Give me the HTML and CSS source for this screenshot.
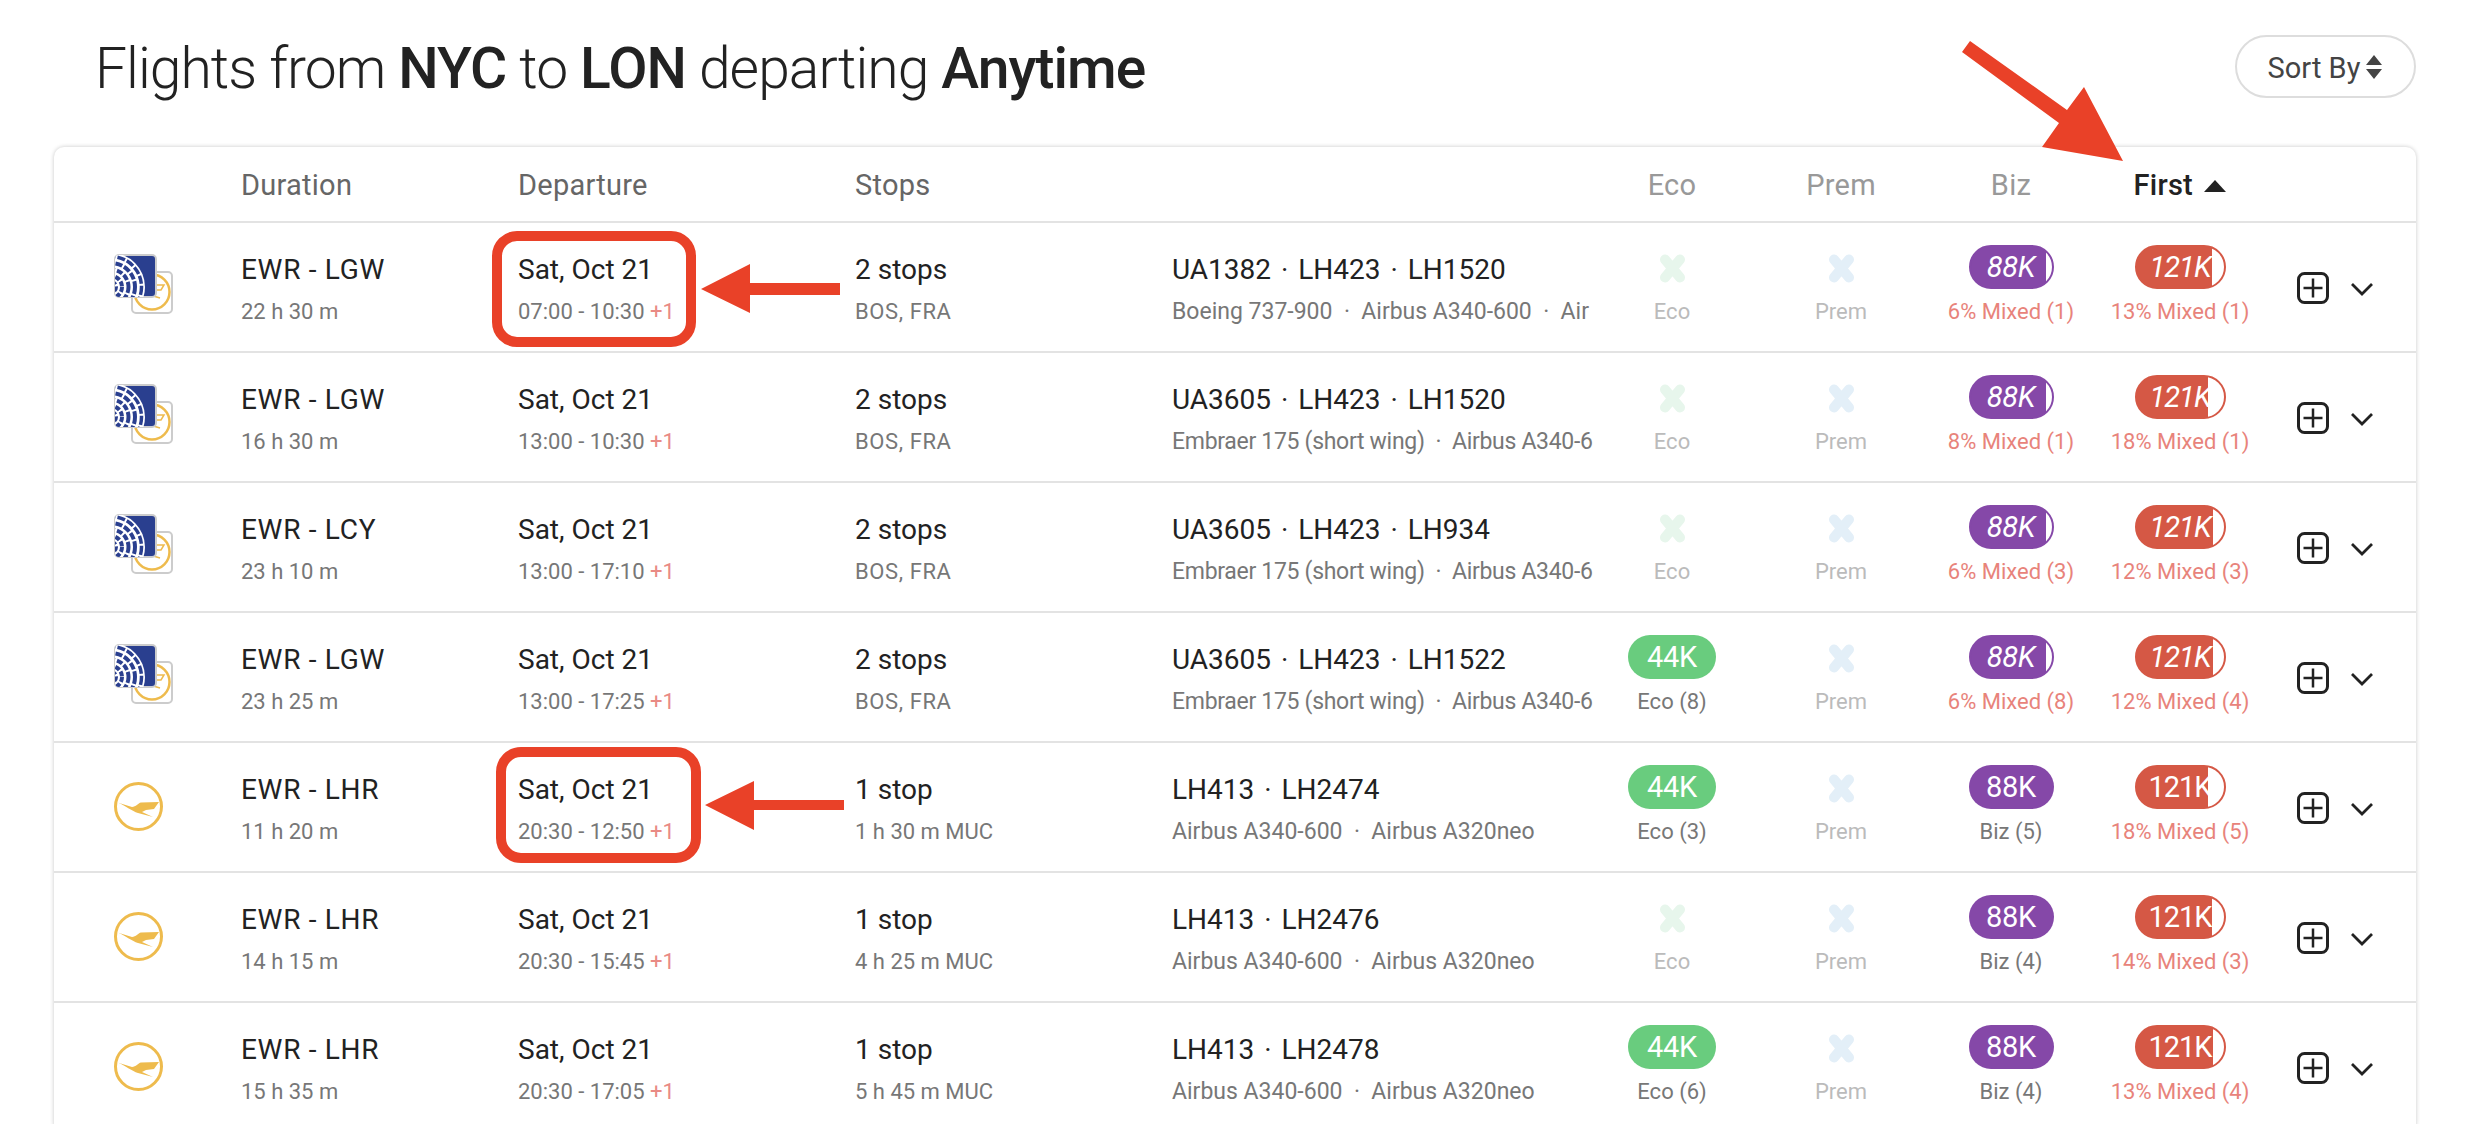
FILE: index.html
```html
<!DOCTYPE html>
<html lang="en">
<head>
<meta charset="utf-8">
<title>Flights from NYC to LON</title>
<link rel="stylesheet" href="styles.css">
</head>
<body>
<svg class="defs" width="0" height="0" aria-hidden="true">
  <defs>
    <clipPath id="ua-clip"><rect x="1" y="1" width="41" height="42" rx="4"/></clipPath>
    <symbol id="bird" viewBox="0 0 60 60">
      <path d="M4.3 28.7L18 33C22 33 24 29 27 28.5L45 28L40 35L32 36L28 38L39 43L24 39C18 37 12 32 4.3 28.7Z" fill="#eebb4d"/>
    </symbol>
    <symbol id="logo-lh" viewBox="0 0 60 60">
      <circle cx="24.5" cy="32.5" r="23" fill="#fff" stroke="#eebb4d" stroke-width="3"/>
      <use href="#bird" width="60" height="60"/>
    </symbol>
    <symbol id="logo-mix" viewBox="0 0 60 60">
      <rect x="18" y="18" width="40" height="41" rx="4" fill="#fff" stroke="#ccc" stroke-width="2"/>
      <circle cx="38" cy="38" r="17.500" fill="none" stroke="#eebb4d" stroke-width="2.500"/>
      <path d="M36 31H50L47 36H42ZM36 41L46 44" fill="none" stroke="#eebb4d" stroke-width="1.500"/>
      <rect x="1" y="1" width="41" height="42" rx="4" fill="#2a3f8f" stroke="#ccc" stroke-width="2"/>
      <g clip-path="url(#ua-clip)">
        <circle cx="-3" cy="33" r="34" fill="#fff"/>
        <g fill="none" stroke="#2a3f8f">
          <circle cx="-3" cy="33" r="30.500" stroke-width="3.500" stroke-dasharray="8 2"/>
          <circle cx="-3" cy="33" r="24" stroke-width="4" stroke-dasharray="7 2"/>
          <circle cx="-3" cy="33" r="17.500" stroke-width="4" stroke-dasharray="6 2"/>
          <circle cx="-3" cy="33" r="11" stroke-width="4" stroke-dasharray="5 2"/>
          <circle cx="-3" cy="33" r="5" stroke-width="4" stroke-dasharray="4 2"/>
        </g>
      </g>
    </symbol>
    <symbol id="cross" viewBox="0 0 29 29">
      <path d="M7 5.500L22 23.500M22 5.500L7 23.500" fill="none" stroke="currentColor" stroke-width="10" stroke-linecap="round"/>
    </symbol>
    <symbol id="plus" viewBox="0 0 32 32">
      <rect x="1.500" y="1.500" width="29" height="29" rx="6" fill="none" stroke="currentColor" stroke-width="3"/>
      <path d="M16 6.500V25.500M6.500 16H25.500" fill="none" stroke="currentColor" stroke-width="2.500"/>
    </symbol>
    <symbol id="chevron" viewBox="0 0 24 14">
      <path d="M2 2L12 12L22 2" fill="none" stroke="currentColor" stroke-width="2.800"/>
    </symbol>
  </defs>
</svg>

<main class="page">
  <header class="topbar">
    <h1 class="title">Flights from <b>NYC</b> to <b>LON</b> departing <b>Anytime</b></h1>
    <button class="sort"><span class="sort-label">Sort By</span>
      <svg class="sort-icon" width="18" height="24" viewBox="0 0 18 24"><path d="M9 0L17 10H1ZM9 24L1 14H17Z" fill="#444"/></svg>
    </button>
  </header>

  <section class="card">
    <div class="grid head">
      <span></span>
      <span>Duration</span>
      <span>Departure</span>
      <span>Stops</span>
      <span></span>
      <span class="h-c">Eco</span>
      <span class="h-c">Prem</span>
      <span class="h-c">Biz</span>
      <span class="h-c active">First <i class="tri"></i></span>
      <span></span>
    </div>

    <div class="grid row">
      <svg class="logo"><use href="#logo-mix"/></svg>
      <div class="cell"><div class="main route">EWR - LGW</div><div class="sub">22 h 30 m</div></div>
      <div class="cell"><div class="main">Sat, Oct 21</div><div class="sub">07:00 - 10:30 <em>+1</em></div></div>
      <div class="cell"><div class="main">2 stops</div><div class="sub code">BOS, FRA</div></div>
      <div class="cell"><div class="main wide">UA1382 · LH423 · LH1520</div><div class="sub wide">Boeing 737-900&nbsp; · &nbsp;Airbus A340-600&nbsp; · &nbsp;Air</div></div>
      <div class="fare"><svg class="x eco"><use href="#cross"/></svg><div class="lbl none">Eco</div></div>
      <div class="fare"><svg class="x prem"><use href="#cross"/></svg><div class="lbl none">Prem</div></div>
      <div class="fare"><div class="pill biz mixed" style="--fill:93%">88K</div><div class="lbl mix">6% Mixed (1)</div></div>
      <div class="fare"><div class="pill first mixed" style="--fill:86%">121K</div><div class="lbl mix">13% Mixed (1)</div></div>
      <div class="actions"><svg class="plus"><use href="#plus"/></svg><svg class="chev"><use href="#chevron"/></svg></div>
    </div>

    <div class="grid row">
      <svg class="logo"><use href="#logo-mix"/></svg>
      <div class="cell"><div class="main route">EWR - LGW</div><div class="sub">16 h 30 m</div></div>
      <div class="cell"><div class="main">Sat, Oct 21</div><div class="sub">13:00 - 10:30 <em>+1</em></div></div>
      <div class="cell"><div class="main">2 stops</div><div class="sub code">BOS, FRA</div></div>
      <div class="cell"><div class="main wide">UA3605 · LH423 · LH1520</div><div class="sub wide tight">Embraer 175 (short wing)&nbsp; · &nbsp;Airbus A340-6</div></div>
      <div class="fare"><svg class="x eco"><use href="#cross"/></svg><div class="lbl none">Eco</div></div>
      <div class="fare"><svg class="x prem"><use href="#cross"/></svg><div class="lbl none">Prem</div></div>
      <div class="fare"><div class="pill biz mixed" style="--fill:92%">88K</div><div class="lbl mix">8% Mixed (1)</div></div>
      <div class="fare"><div class="pill first mixed" style="--fill:82%">121K</div><div class="lbl mix">18% Mixed (1)</div></div>
      <div class="actions"><svg class="plus"><use href="#plus"/></svg><svg class="chev"><use href="#chevron"/></svg></div>
    </div>

    <div class="grid row">
      <svg class="logo"><use href="#logo-mix"/></svg>
      <div class="cell"><div class="main route">EWR - LCY</div><div class="sub">23 h 10 m</div></div>
      <div class="cell"><div class="main">Sat, Oct 21</div><div class="sub">13:00 - 17:10 <em>+1</em></div></div>
      <div class="cell"><div class="main">2 stops</div><div class="sub code">BOS, FRA</div></div>
      <div class="cell"><div class="main wide">UA3605 · LH423 · LH934</div><div class="sub wide tight">Embraer 175 (short wing)&nbsp; · &nbsp;Airbus A340-6</div></div>
      <div class="fare"><svg class="x eco"><use href="#cross"/></svg><div class="lbl none">Eco</div></div>
      <div class="fare"><svg class="x prem"><use href="#cross"/></svg><div class="lbl none">Prem</div></div>
      <div class="fare"><div class="pill biz mixed" style="--fill:93%">88K</div><div class="lbl mix">6% Mixed (3)</div></div>
      <div class="fare"><div class="pill first mixed" style="--fill:87%">121K</div><div class="lbl mix">12% Mixed (3)</div></div>
      <div class="actions"><svg class="plus"><use href="#plus"/></svg><svg class="chev"><use href="#chevron"/></svg></div>
    </div>

    <div class="grid row">
      <svg class="logo"><use href="#logo-mix"/></svg>
      <div class="cell"><div class="main route">EWR - LGW</div><div class="sub">23 h 25 m</div></div>
      <div class="cell"><div class="main">Sat, Oct 21</div><div class="sub">13:00 - 17:25 <em>+1</em></div></div>
      <div class="cell"><div class="main">2 stops</div><div class="sub code">BOS, FRA</div></div>
      <div class="cell"><div class="main wide">UA3605 · LH423 · LH1522</div><div class="sub wide tight">Embraer 175 (short wing)&nbsp; · &nbsp;Airbus A340-6</div></div>
      <div class="fare"><div class="pill eco-pill">44K</div><div class="lbl">Eco (8)</div></div>
      <div class="fare"><svg class="x prem"><use href="#cross"/></svg><div class="lbl none">Prem</div></div>
      <div class="fare"><div class="pill biz mixed" style="--fill:93%">88K</div><div class="lbl mix">6% Mixed (8)</div></div>
      <div class="fare"><div class="pill first mixed" style="--fill:87%">121K</div><div class="lbl mix">12% Mixed (4)</div></div>
      <div class="actions"><svg class="plus"><use href="#plus"/></svg><svg class="chev"><use href="#chevron"/></svg></div>
    </div>

    <div class="grid row">
      <svg class="logo"><use href="#logo-lh"/></svg>
      <div class="cell"><div class="main route">EWR - LHR</div><div class="sub">11 h 20 m</div></div>
      <div class="cell"><div class="main">Sat, Oct 21</div><div class="sub">20:30 - 12:50 <em>+1</em></div></div>
      <div class="cell"><div class="main">1 stop</div><div class="sub">1 h 30 m MUC</div></div>
      <div class="cell"><div class="main wide">LH413 · LH2474</div><div class="sub wide">Airbus A340-600&nbsp; · &nbsp;Airbus A320neo</div></div>
      <div class="fare"><div class="pill eco-pill">44K</div><div class="lbl">Eco (3)</div></div>
      <div class="fare"><svg class="x prem"><use href="#cross"/></svg><div class="lbl none">Prem</div></div>
      <div class="fare"><div class="pill biz">88K</div><div class="lbl">Biz (5)</div></div>
      <div class="fare"><div class="pill first part" style="--fill:82%">121K</div><div class="lbl mix">18% Mixed (5)</div></div>
      <div class="actions"><svg class="plus"><use href="#plus"/></svg><svg class="chev"><use href="#chevron"/></svg></div>
    </div>

    <div class="grid row">
      <svg class="logo"><use href="#logo-lh"/></svg>
      <div class="cell"><div class="main route">EWR - LHR</div><div class="sub">14 h 15 m</div></div>
      <div class="cell"><div class="main">Sat, Oct 21</div><div class="sub">20:30 - 15:45 <em>+1</em></div></div>
      <div class="cell"><div class="main">1 stop</div><div class="sub">4 h 25 m MUC</div></div>
      <div class="cell"><div class="main wide">LH413 · LH2476</div><div class="sub wide">Airbus A340-600&nbsp; · &nbsp;Airbus A320neo</div></div>
      <div class="fare"><svg class="x eco"><use href="#cross"/></svg><div class="lbl none">Eco</div></div>
      <div class="fare"><svg class="x prem"><use href="#cross"/></svg><div class="lbl none">Prem</div></div>
      <div class="fare"><div class="pill biz">88K</div><div class="lbl">Biz (4)</div></div>
      <div class="fare"><div class="pill first part" style="--fill:86%">121K</div><div class="lbl mix">14% Mixed (3)</div></div>
      <div class="actions"><svg class="plus"><use href="#plus"/></svg><svg class="chev"><use href="#chevron"/></svg></div>
    </div>

    <div class="grid row">
      <svg class="logo"><use href="#logo-lh"/></svg>
      <div class="cell"><div class="main route">EWR - LHR</div><div class="sub">15 h 35 m</div></div>
      <div class="cell"><div class="main">Sat, Oct 21</div><div class="sub">20:30 - 17:05 <em>+1</em></div></div>
      <div class="cell"><div class="main">1 stop</div><div class="sub">5 h 45 m MUC</div></div>
      <div class="cell"><div class="main wide">LH413 · LH2478</div><div class="sub wide">Airbus A340-600&nbsp; · &nbsp;Airbus A320neo</div></div>
      <div class="fare"><div class="pill eco-pill">44K</div><div class="lbl">Eco (6)</div></div>
      <div class="fare"><svg class="x prem"><use href="#cross"/></svg><div class="lbl none">Prem</div></div>
      <div class="fare"><div class="pill biz">88K</div><div class="lbl">Biz (4)</div></div>
      <div class="fare"><div class="pill first part" style="--fill:87%">121K</div><div class="lbl mix">13% Mixed (4)</div></div>
      <div class="actions"><svg class="plus"><use href="#plus"/></svg><svg class="chev"><use href="#chevron"/></svg></div>
    </div>
  </section>
</main>

<svg class="annotations" width="2468" height="1124" viewBox="0 0 2468 1124" aria-hidden="true">
  <rect x="497" y="236" width="194" height="106" rx="20" fill="none" stroke="#e94128" stroke-width="10"/>
  <rect x="501" y="752" width="195" height="106" rx="20" fill="none" stroke="#e94128" stroke-width="10"/>
  <path d="M701 289L750 264V283H840V295H750V313Z" fill="#e94128"/>
  <path d="M705 805L754 781V800H844V810H754V830Z" fill="#e94128"/>
  <path d="M1970 41L2067 110L2084 87L2123 161L2042 147L2059 123L1962 52Z" fill="#e94128"/>
</svg>
</body>
</html>
```
FILE: styles.css
```css
* { box-sizing: border-box; }
html, body { margin: 0; height: 1124px; overflow: hidden; background: #fff; }
body { font-family: Roboto, "Liberation Sans", sans-serif; color: #222; position: relative; }
.defs { position: absolute; }

.page { padding: 0 52px 0 54px; }
.topbar { display: flex; justify-content: space-between; align-items: flex-start; height: 147px; }
.title { margin: 36px 0 0 41px; font-size: 57px; line-height: 66px; font-weight: 300; letter-spacing: -.95px; white-space: nowrap; }
.title b { font-weight: 500; }
.sort { margin-top: 35px; width: 181px; height: 63px; border: 2px solid #ddd; border-radius: 32px; background: #fff; display: flex; align-items: center; justify-content: center; gap: 5px; font: 400 29px Roboto, sans-serif; color: #444; padding: 0; }
.sort-label { padding-top: 2px; }
.sort-icon { display: block; }

.card { border-radius: 10px; box-shadow: 0 0 4px rgba(0, 0, 0, .22); background: #fff; }
.grid { display: grid; grid-template-columns: 187px 277px 337px 317px 423px 154px 184px 156px 182px 145px; }
.head { height: 76px; border-bottom: 2px solid #e3e3e3; align-items: center; font-size: 29px; letter-spacing: .25px; color: #666; padding-top: 2px; }
.h-c { text-align: center; color: #999; }
.active { color: #222; font-weight: 500; }
.tri { display: inline-block; width: 0; height: 0; border: 11px solid transparent; border-top: 0; border-bottom: 12px solid #222; margin-left: 4px; vertical-align: 3px; }

.row { height: 130px; border-bottom: 2px solid #e3e3e3; align-items: start; }
.logo { width: 60px; height: 60px; margin: 31px 0 0 60px; display: block; }
.cell { margin-top: 27px; min-width: 0; }
.main { font-size: 28px; line-height: 40px; white-space: nowrap; overflow: hidden; }
.route { letter-spacing: .7px; }
.sub { font-size: 22px; line-height: 30px; margin-top: 7px; color: #777; white-space: nowrap; overflow: hidden; }
.code { letter-spacing: .6px; }
.sub em { font-style: normal; color: #e98a84; }
.main.wide { word-spacing: 3px; }
.sub.wide { font-size: 23px; }
.sub.tight { letter-spacing: -.3px; }

.fare { margin-top: 22px; display: flex; flex-direction: column; align-items: center; }
.pill { height: 44px; width: 85px; border-radius: 22px; display: flex; align-items: center; justify-content: center; color: #fff; font-size: 29px; letter-spacing: -.3px; }
.eco-pill { width: 88px; background: #69cc7e; }
.biz { background: #8548a8; --c: #8548a8; }
.first { width: 91px; background: #d55845; --c: #d55845; letter-spacing: -1px; }
.part, .mixed { background: linear-gradient(to right, var(--c) var(--fill), #fff var(--fill)); border: 2px solid var(--c); }
.mixed { font-style: italic; }
.x { display: block; width: 29px; height: 29px; margin: 9px 0 6px; }
.x.eco { color: #e7f6ec; }
.x.prem { color: #e3eff8; }
.lbl { margin-top: 8px; font-size: 22px; line-height: 30px; color: #777; white-space: nowrap; }
.lbl.none { color: #bbb; }
.lbl.mix { color: #e8837b; }

.actions { display: flex; align-items: center; margin: 49px 0 0 26px; gap: 21px; color: #222; }
.plus { width: 32px; height: 32px; display: block; }
.chev { width: 24px; height: 14px; display: block; transform: translateY(1px); }

.annotations { position: absolute; left: 0; top: 0; pointer-events: none; }
```
